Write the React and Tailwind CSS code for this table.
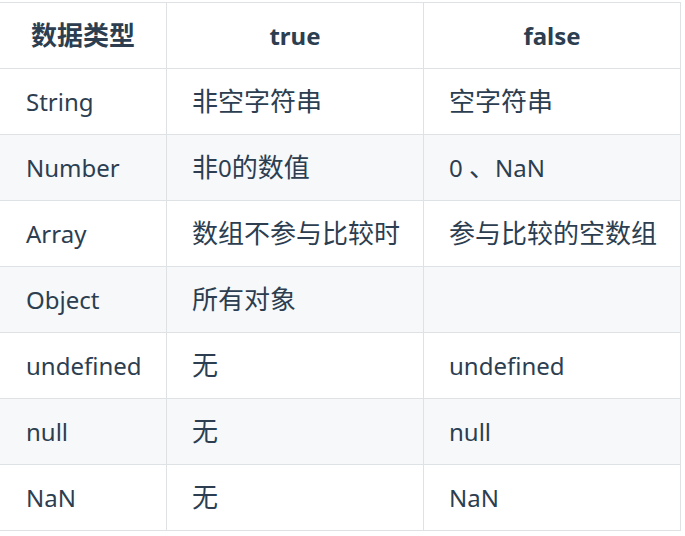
const rows = [
  ['String', '非空字符串', '空字符串'],
  ['Number', '非0的数值', '0 、NaN'],
  ['Array', '数组不参与比较时', '参与比较的空数组'],
  ['Object', '所有对象', ''],
  ['undefined', '无', 'undefined'],
  ['null', '无', 'null'],
  ['NaN', '无', 'NaN'],
];

// CJK glyphs in the shot are a touch larger than the latin ones
function Mixed({ text }) {
  const parts = text.split(/([\u3000-\u303f\u4e00-\u9fff]+)/).filter(Boolean);
  return (
    <span>
      {parts.map((p, i) =>
        /[\u3000-\u303f\u4e00-\u9fff]/.test(p) ? (
          <span key={i} className="text-[26px]">
            {p}
          </span>
        ) : (
          <span key={i}>{p}</span>
        )
      )}
    </span>
  );
}

export default function App() {
  return (
    <div
      className="bg-white pt-[2px] text-[24px] text-[#2c3e50]"
      style={{ fontFamily: '"Noto Sans", "Noto Sans CJK SC", sans-serif' }}
    >
      <div className="grid w-[681px] grid-cols-[166px_257px_258px] border-t border-[#dfe2e5]">
        <div className="flex h-[66px] items-center justify-center border-b border-[#dfe2e5] text-[26px] font-bold">
          数据类型
        </div>
        <div className="flex h-[66px] items-center justify-center border-b border-l border-[#dfe2e5] font-bold">
          true
        </div>
        <div className="flex h-[66px] items-center justify-center border-b border-l border-r border-[#dfe2e5] font-bold">
          false
        </div>

        {rows.map((r, i) => {
          const bg = i % 2 === 1 ? 'bg-[#f6f8fa]' : 'bg-white';
          return (
            <div key={i} className="contents">
              <div className={`flex h-[66px] items-center border-b border-[#dfe2e5] pl-[26px] ${bg}`}>
                <Mixed text={r[0]} />
              </div>
              <div className={`flex h-[66px] items-center border-b border-l border-[#dfe2e5] pl-[25px] ${bg}`}>
                <Mixed text={r[1]} />
              </div>
              <div className={`flex h-[66px] items-center border-b border-l border-r border-[#dfe2e5] pl-[25px] ${bg}`}>
                <Mixed text={r[2]} />
              </div>
            </div>
          );
        })}
      </div>
    </div>
  );
}
